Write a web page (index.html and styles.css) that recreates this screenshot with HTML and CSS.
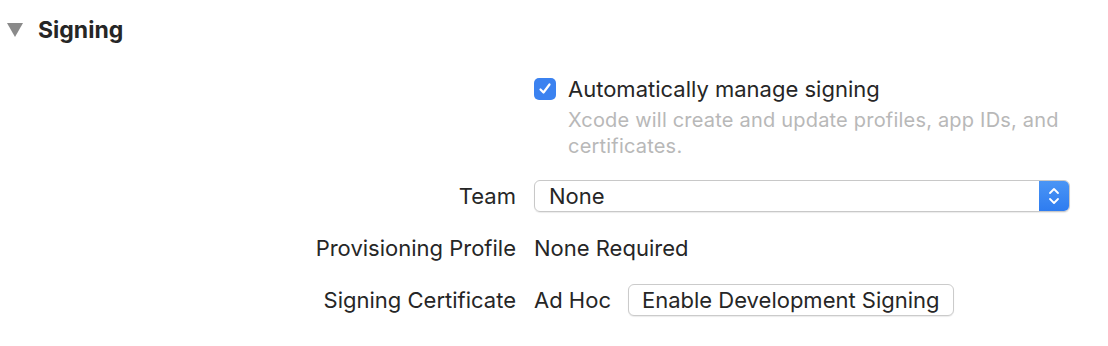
FILE: index.html
```html
<!DOCTYPE html>
<html lang="en">
<head>
    <meta charset="UTF-8">
    <title>Signing</title>
    <link rel="stylesheet" href="styles.css">
</head>
<body>
    <div class="section">
        <div class="sectionHeader">
            <span class="disclosure"></span>
            <h2>Signing</h2>
        </div>
        <div class="form">
            <div class="label"></div>
            <div class="value autoRow">
                <span class="checkbox">
                    <svg width="14" height="14" viewBox="0 0 14 14">
                        <path d="M2.5 7.5 L5.5 10.5 L11.5 2.5" fill="none" stroke="#fff" stroke-width="2.2" stroke-linecap="round" stroke-linejoin="round"/>
                    </svg>
                </span>
                <div>
                    <div class="checkText">Automatically manage signing</div>
                    <div class="hint">Xcode will create and update profiles, app IDs, and certificates.</div>
                </div>
            </div>

            <div class="label">Team</div>
            <div class="value">
                <div class="popup">
                    <span class="popupText">None</span>
                    <span class="stepper">
                        <svg width="14" height="22" viewBox="0 0 14 22">
                            <path d="M3 8 L7 4 L11 8 M3 14 L7 18 L11 14" fill="none" stroke="#fff" stroke-width="1.8" stroke-linecap="round" stroke-linejoin="round"/>
                        </svg>
                    </span>
                </div>
            </div>

            <div class="label">Provisioning Profile</div>
            <div class="value">None Required</div>

            <div class="label">Signing Certificate</div>
            <div class="value">
                <span>Ad Hoc</span>
                <button class="pushButton">Enable Development Signing</button>
            </div>
        </div>
    </div>
</body>
</html>
```

FILE: styles.css
```css
body {
    margin: 0;
    background-color: #ffffff;
    font-family: Inter, "Liberation Sans", sans-serif;
    color: #262626;
}

.section {
    padding: 15px 0 0 7px;
}

.sectionHeader {
    display: flex;
    align-items: center;
    height: 30px;
}

.disclosure {
    width: 0;
    height: 0;
    border-left: 8px solid transparent;
    border-right: 8px solid transparent;
    border-top: 14px solid #8a8a8a;
    margin-right: 15px;
}

h2 {
    margin: 0;
    font-size: 23px;
    font-weight: 700;
    color: #262626;
}

.form {
    display: grid;
    grid-template-columns: 509px 536px;
    column-gap: 18px;
    margin-top: 33px;
    font-size: 22px;
}

.label {
    text-align: right;
    height: 52px;
    line-height: 52px;
}

.value {
    display: flex;
    align-items: center;
    gap: 17px;
    height: 52px;
}

.autoRow {
    height: auto;
    align-items: flex-start;
    gap: 12px;
    margin-bottom: 11px;
}

.checkbox {
    width: 22px;
    height: 22px;
    border-radius: 5px;
    background-color: #3b82f0;
    display: flex;
    align-items: center;
    justify-content: center;
    flex-shrink: 0;
}

.checkText {
    line-height: 26px;
    margin-top: -2px;
}

.hint {
    color: #b8b8b8;
    font-size: 20px;
    letter-spacing: 0.2px;
    line-height: 26px;
    margin-top: 5px;
}

.popup {
    display: flex;
    width: 536px;
    height: 32px;
    border: 1px solid #c8c8c8;
    border-radius: 6px;
    box-sizing: border-box;
    overflow: hidden;
    box-shadow: 0 1px 1px rgba(0, 0, 0, 0.08);
}

.popupText {
    flex: 1;
    padding-left: 14px;
    line-height: 30px;
}

.stepper {
    width: 30px;
    background: linear-gradient(#4a95f5, #2e7cf0);
    display: flex;
    align-items: center;
    justify-content: center;
}

.pushButton {
    font-family: inherit;
    font-size: 22px;
    color: #262626;
    background-color: #ffffff;
    border: 1px solid #cbcbcb;
    border-radius: 6px;
    height: 32px;
    padding: 0 13px;
    box-shadow: 0 1px 1px rgba(0, 0, 0, 0.08);
}
```
